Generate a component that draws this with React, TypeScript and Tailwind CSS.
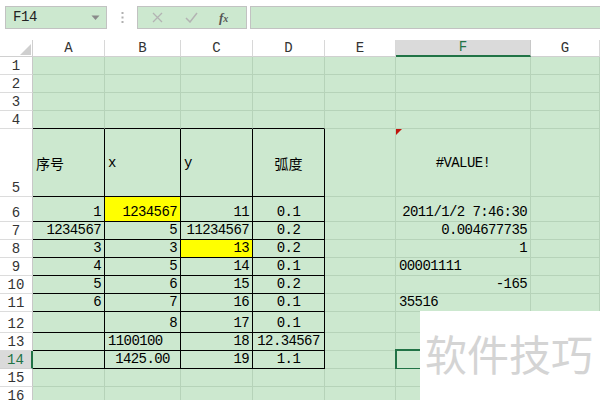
import React from "react";

type Cell = { t: string; a: "l" | "r" | "c"; y?: boolean };

const COLS = ["A", "B", "C", "D", "E", "F", "G"];
const ROW_H = [18, 18, 18, 18, 68, 25, 18, 18, 18, 18, 18, 21, 18, 18, 18, 18];

const data: Record<string, Cell> = {
  A5: { t: "序号", a: "l" },
  B5: { t: "x", a: "l" },
  C5: { t: "y", a: "l" },
  D5: { t: "弧度", a: "c" },
  F5: { t: "#VALUE!", a: "c" },
  A6: { t: "1", a: "r" },
  B6: { t: "1234567", a: "r", y: true },
  C6: { t: "11", a: "r" },
  D6: { t: "0.1", a: "c" },
  F6: { t: "2011/1/2 7:46:30", a: "r" },
  A7: { t: "1234567", a: "r" },
  B7: { t: "5", a: "r" },
  C7: { t: "11234567", a: "r" },
  D7: { t: "0.2", a: "c" },
  F7: { t: "0.004677735", a: "r" },
  A8: { t: "3", a: "r" },
  B8: { t: "3", a: "r" },
  C8: { t: "13", a: "r", y: true },
  D8: { t: "0.2", a: "c" },
  F8: { t: "1", a: "r" },
  A9: { t: "4", a: "r" },
  B9: { t: "5", a: "r" },
  C9: { t: "14", a: "r" },
  D9: { t: "0.1", a: "c" },
  F9: { t: "00001111", a: "l" },
  A10: { t: "5", a: "r" },
  B10: { t: "6", a: "r" },
  C10: { t: "15", a: "r" },
  D10: { t: "0.2", a: "c" },
  F10: { t: "-165", a: "r" },
  A11: { t: "6", a: "r" },
  B11: { t: "7", a: "r" },
  C11: { t: "16", a: "r" },
  D11: { t: "0.1", a: "c" },
  F11: { t: "35516", a: "l" },
  B12: { t: "8", a: "r" },
  C12: { t: "17", a: "r" },
  D12: { t: "0.1", a: "c" },
  B13: { t: "1100100", a: "l" },
  C13: { t: "18", a: "r" },
  D13: { t: "12.34567", a: "c" },
  B14: { t: "1425.00", a: "c" },
  C14: { t: "19", a: "r" },
  D14: { t: "1.1", a: "c" },
};

function Toolbar() {
  return (
    <div className="h-[40px] pt-[6px] flex items-start bg-white">
      <div className="ml-[5px] w-[102px] h-[23px] border border-[#c2c2c2] bg-[#cce8cf] flex items-center justify-between pl-[7px] pr-[6px]">
        <span className="text-[14px] tracking-[-0.4px] text-[#222] font-['Liberation_Mono',monospace]">F14</span>
        <svg width="9" height="6" viewBox="0 0 9 6">
          <path d="M0.5 0.5 L8.5 0.5 L4.5 5 Z" fill="#8a8a8a" />
        </svg>
      </div>
      <div className="w-[30px] h-[23px] flex items-center justify-center">
        <svg width="3" height="11" viewBox="0 0 3 11">
          <rect x="0.5" y="0" width="2" height="2" fill="#b0b0b0" />
          <rect x="0.5" y="4.5" width="2" height="2" fill="#b0b0b0" />
          <rect x="0.5" y="9" width="2" height="2" fill="#b0b0b0" />
        </svg>
      </div>
      <div className="w-[110px] h-[23px] border border-[#c2c2c2] bg-[#cce8cf] flex items-center">
        <svg className="ml-[14px]" width="11" height="11" viewBox="0 0 11 11">
          <path d="M1 1 L10 10 M10 1 L1 10" stroke="#b3b3b3" strokeWidth="1.3" />
        </svg>
        <svg className="ml-[22px]" width="13" height="11" viewBox="0 0 13 11">
          <path d="M1 6 L5 10 L12 1" stroke="#b3b3b3" strokeWidth="1.5" fill="none" />
        </svg>
        <span className="ml-[21px] text-[13px] italic font-bold text-[#555] font-['Liberation_Serif',serif] leading-none">
          f<span className="text-[10px]">x</span>
        </span>
      </div>
      <div className="ml-[3px] flex-1 h-[23px] border border-r-0 border-[#c2c2c2] bg-[#cce8cf]" />
    </div>
  );
}

function HeaderRow() {
  return (
    <>
      <div className="relative bg-white border-r border-b border-[#d0d0d0]">
        <div className="absolute left-[20px] top-[4px] w-0 h-0 border-b-[11px] border-b-[#cfcfcf] border-l-[11px] border-l-transparent" />
      </div>
      {COLS.map((c) => (
        <div
          key={c}
          className={
            c === "F"
              ? "flex items-center justify-center bg-[#dadada] border-r border-[#c8c8c8] border-b-2 border-b-[#217346] text-[#217346] text-[14px]"
              : "flex items-center justify-center bg-white border-r border-b border-r-[#d8d8d8] border-b-[#d0d0d0] text-[#333] text-[14px]"
          }
        >
          {c}
        </div>
      ))}
    </>
  );
}

function RowHeader({ r }: { r: number }) {
  const sel = r === 14;
  return (
    <div
      className={
        sel
          ? "flex items-end justify-center pb-[0px] bg-[#dadada] border-b border-b-[#d0d0d0] border-r-2 border-r-[#217346] text-[#217346] text-[14px] leading-[16px]"
          : "flex items-end justify-center pb-[0px] bg-white border-b border-b-[#dcdcdc] border-r border-r-[#c8c8c8] text-[#333] text-[14px] leading-[16px]"
      }
    >
      {r}
    </div>
  );
}

function DataCell({ r, ci }: { r: number; ci: number }) {
  const col = COLS[ci];
  const key = `${col}${r}`;
  const cell = data[key];
  const inTable = ci <= 3 && r >= 5 && r <= 14;
  const topEdge = ci <= 3 && r === 4;
  const rightBorder = inTable ? "border-r-black" : "border-r-[#b6d3b9]";
  const bottomBorder = inTable || topEdge ? "border-b-black" : "border-b-[#b6d3b9]";
  const bg = cell?.y ? "bg-[#ffff00]" : "bg-[#cce8cf]";
  const justify =
    cell?.a === "r" ? "justify-end" : cell?.a === "c" ? "justify-center" : "justify-start";
  const vert = r === 5 ? "items-center" : "items-end pb-[1px]";
  const isCJK = cell && /[\u4e00-\u9fff]/.test(cell.t);
  return (
    <div
      className={`relative flex px-[3px] whitespace-nowrap border-r border-b ${rightBorder} ${bottomBorder} ${bg} ${justify} ${vert}`}
    >
      {cell && (
        <span
          className={
            isCJK
              ? "text-[14px] leading-[16px] text-black font-['Noto_Sans_CJK_SC',sans-serif]"
              : "text-[14px] tracking-[-0.6px] leading-[16px] text-black"
          }
        >
          {cell.t}
        </span>
      )}
      {key === "F5" && (
        <div className="absolute left-0 top-0 w-0 h-0 border-t-[6px] border-t-[#c0140c] border-r-[6px] border-r-transparent" />
      )}
      {key === "D12" && <div className="absolute right-[-2px] top-0 bottom-0 w-[1px] bg-[#f2957a]" />}
      {key === "F14" && (
        <div className="absolute left-[-1px] top-[-2px] right-[-1px] bottom-[-2px] border-2 border-[#217346]" />
      )}
    </div>
  );
}

export default function App() {
  return (
    <div className="relative w-[600px] h-[400px] overflow-hidden bg-white font-['Liberation_Mono','Noto_Sans_CJK_SC',monospace]">
      <Toolbar />
      <div className="grid grid-cols-[33px_72px_76px_72px_72px_71px_135px_69px] grid-rows-[17px_18px_18px_18px_18px_68px_25px_18px_18px_18px_18px_18px_21px_18px_18px_18px_18px]">
        <HeaderRow />
        {ROW_H.map((_, i) => {
          const r = i + 1;
          return (
            <React.Fragment key={r}>
              <RowHeader r={r} />
              {COLS.map((c, ci) => (
                <DataCell key={c} r={r} ci={ci} />
              ))}
            </React.Fragment>
          );
        })}
      </div>
      <div className="absolute left-[420px] top-[311px] w-[180px] h-[89px] bg-white pt-[21px] pl-[5px]">
        <span className="text-[42px] leading-[42px] text-[#d4d4d4] font-['Noto_Sans_CJK_SC',sans-serif] whitespace-nowrap">
          软件技巧
        </span>
      </div>
    </div>
  );
}
